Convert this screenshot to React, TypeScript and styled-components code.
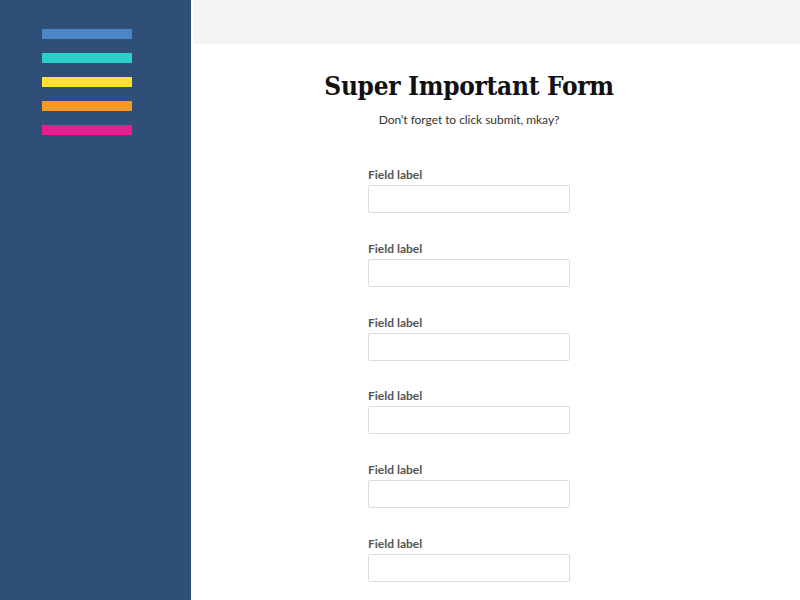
import React from "react";
import styled, { createGlobalStyle } from "styled-components";

const Global = createGlobalStyle`
  html, body { margin: 0; padding: 0; background: #ffffff; }
  body { font-family: Lato, "Open Sans", sans-serif; }
  * { box-sizing: border-box; }
`;

const Layout = styled.div`
  display: grid;
  grid-template-columns: 191px 1fr;
  min-height: 600px;
  height: 600px;
  overflow: hidden;
`;

const Sidebar = styled.aside`
  background: #2f4f78;
  padding: 29px 0 0 42px;
  display: flex;
  flex-direction: column;
  gap: 14px;
`;

const Stripe = styled.div<{ $color: string }>`
  width: 90px;
  height: 10px;
  background: ${(p) => p.$color};
`;

const Main = styled.main`
  display: flex;
  flex-direction: column;
  padding-left: 2px;
`;

const TopBar = styled.header`
  height: 44px;
  background: #f4f4f4;
`;

const Content = styled.div`
  width: 552px;
  display: flex;
  flex-direction: column;
  align-items: center;
`;

const Title = styled.h1`
  margin: 26px 0 0;
  font-family: "DejaVu Serif", serif;
  font-stretch: condensed;
  font-weight: 700;
  font-size: 26px;
  line-height: 32px;
  color: #111;
  letter-spacing: -0.3px;
`;

const Subtitle = styled.p`
  margin: 10px 0 0;
  font-size: 12px;
  line-height: 16px;
  color: #333;
  letter-spacing: -0.05px;
`;

const Form = styled.form`
  margin-top: 39px;
  width: 202px;
  display: flex;
  flex-direction: column;
  gap: 27.75px;
`;

const Field = styled.div`
  display: flex;
  flex-direction: column;
  gap: 3px;
`;

const Label = styled.label`
  font-size: 12px;
  font-weight: 700;
  line-height: 15px;
  color: #555;
`;

const Input = styled.input`
  width: 202px;
  height: 28px;
  border: 1px solid #dcdcdc;
  border-radius: 2px;
  background: #fff;
  outline: none;
`;

const stripes = ["#4a86c8", "#2ccfcb", "#ffe22f", "#f39a26", "#e91e8c"];

export default function App() {
  return (
    <>
      <Global />
      <Layout>
        <Sidebar>
          {stripes.map((c) => (
            <Stripe key={c} $color={c} />
          ))}
        </Sidebar>
        <Main>
          <TopBar />
          <Content>
            <Title>Super Important Form</Title>
            <Subtitle>Don’t forget to click submit, mkay?</Subtitle>
            <Form>
              {Array.from({ length: 6 }).map((_, i) => (
                <Field key={i}>
                  <Label>Field label</Label>
                  <Input type="text" />
                </Field>
              ))}
            </Form>
          </Content>
        </Main>
      </Layout>
    </>
  );
}
